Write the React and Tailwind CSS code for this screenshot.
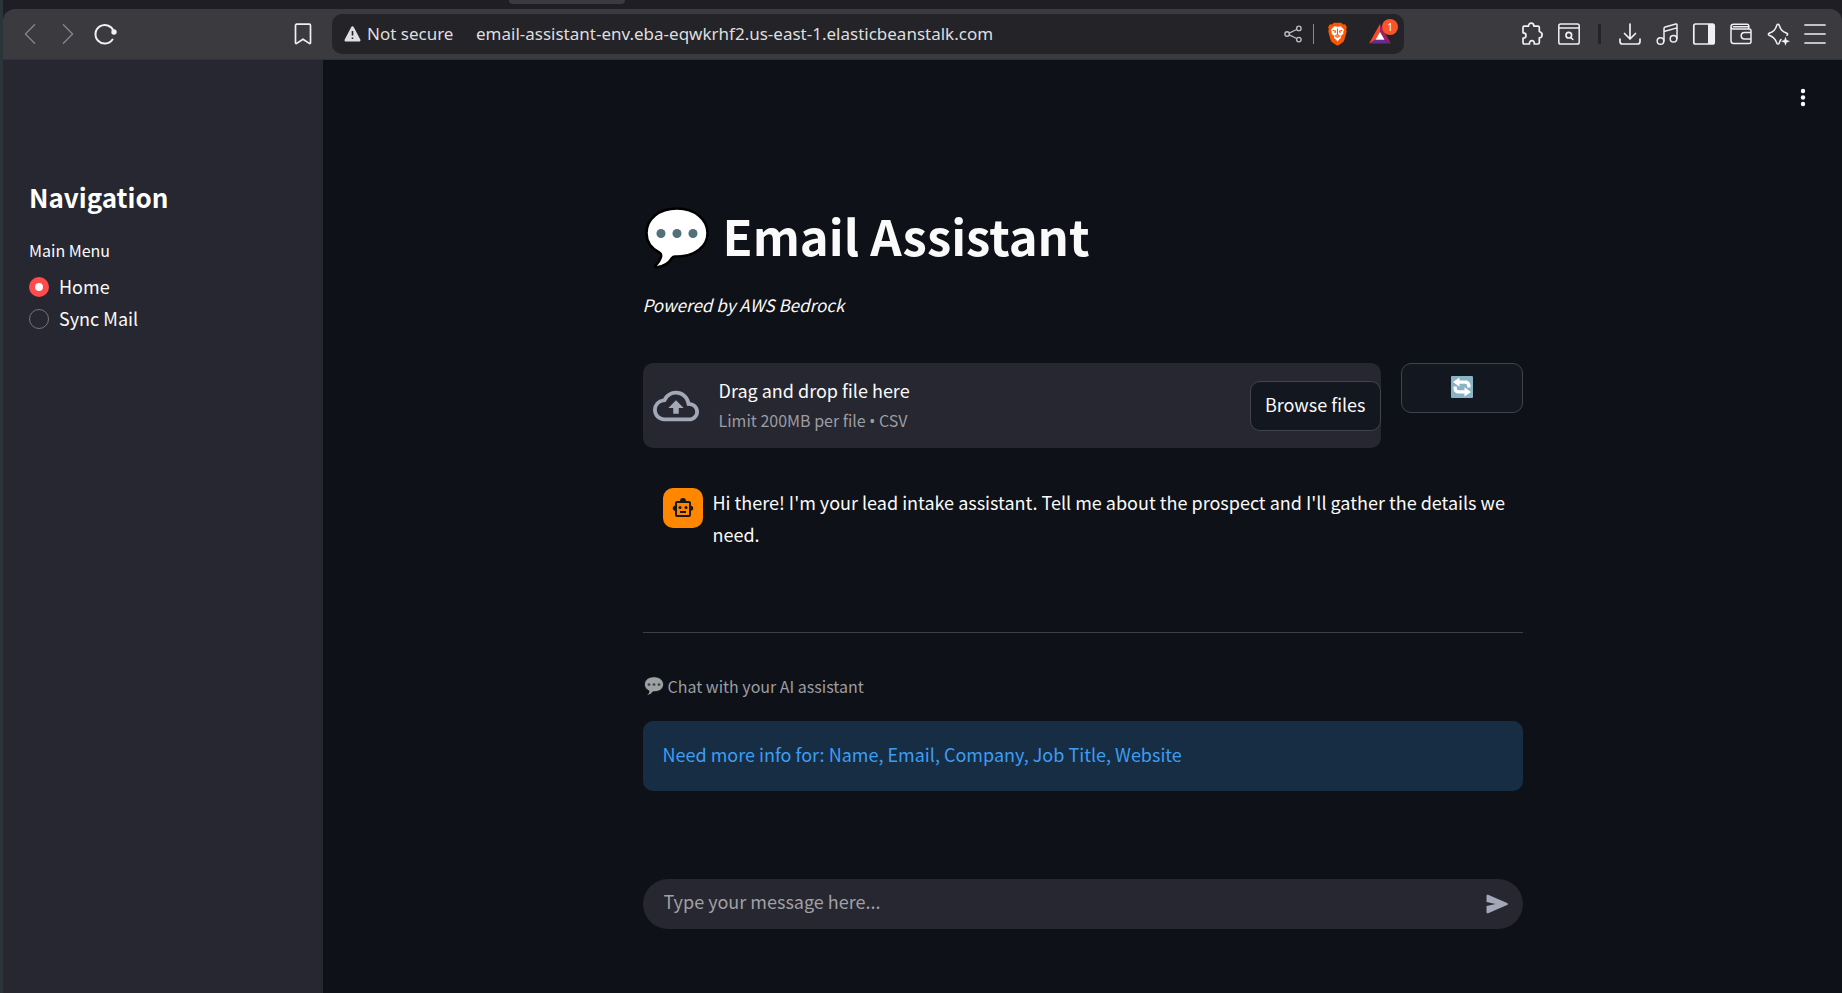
import clsx from "clsx";

function Icon({ size = "size-6", children, viewBox = "0 0 24 24" }) {
  return (
    <svg
      viewBox={viewBox}
      className={size}
      fill="none"
      stroke="currentColor"
      strokeWidth="1.5"
      strokeLinecap="round"
      strokeLinejoin="round"
      aria-hidden="true"
    >
      {children}
    </svg>
  );
}

function SpeechBubble({ className }) {
  return (
    <svg viewBox="0 0 64 62" className={className} aria-hidden="true">
      <path
        d="M32 1.5C14 1.5 1.5 12 1.5 26c0 9 5 15.500 13 19.500 1.500 1 2 2.500 1.500 4.500-.8 3.300-3.500 6.500-5.500 8.500-.8 1 0 2 1.300 1.800C19 59.500 24 56 27 51c.8-1.300 1.800-1.500 3-1.500h2c18 0 30.500-10 30.500-23.500S50 1.500 32 1.500z"
        fill="#fff"
        stroke="#000"
        strokeWidth="2.500"
      />
      <circle cx="16" cy="26.500" r="4.500" fill="#546e7a" />
      <circle cx="32" cy="26.500" r="4.500" fill="#546e7a" />
      <circle cx="48" cy="26.500" r="4.500" fill="#546e7a" />
    </svg>
  );
}

function BraveLogo() {
  return (
    <svg viewBox="0 0 22 26" className="h-6 w-[21px]" aria-hidden="true">
      <path
        d="M7 0.800h8l2 2 2.200-.3 2 3.200-.8 2 .6 2.500-2.600 9.300c-.3 1.200-1 2-2 2.700l-4.300 2.900c-.8.5-1.400.5-2.200 0l-4.300-2.900c-1-.7-1.700-1.500-2-2.700L1 10.200l.6-2.500-.8-2 2-3.200 2.200.3z"
        fill="#ff5500"
      />
      <path
        d="M7.500 4.500l3.500.6 3.500-.6 3.800 4.200-1.200 2 .4 1.800-3 3 .3 1.800-1.500 1.200L11 21l-2.300-2.500-1.500-1.200.3-1.800-3-3 .4-1.800-1.200-2z"
        fill="#fff"
      />
      <path
        d="M5.800 9l3 .9-.6 2.200M16.200 9l-3 .9.6 2.200M11 7v6.500M8.700 15.200l2.300-1.500 2.300 1.500-2.300 1.500z"
        fill="none"
        stroke="#ff5500"
        strokeWidth="1.200"
      />
    </svg>
  );
}

function RewardsLogo() {
  return (
    <svg viewBox="0 0 24 22" className="h-5 w-[22px]" aria-hidden="true">
      <path d="M12 0L0 21.500l7-4.200L12 8.500z" fill="#ff4724" />
      <path d="M12 0l12 21.500-7-4.200-5-8.800z" fill="#9e1f63" />
      <path d="M0 21.500h24l-7-4.200H7z" fill="#662d91" />
      <path d="M12 8.500l-5 8.800h10z" fill="#fff" />
    </svg>
  );
}

function ToolButton({ label, className, children }) {
  return (
    <button
      type="button"
      aria-label={label}
      className={clsx("flex h-8 shrink-0 items-center justify-center", className)}
    >
      {children}
    </button>
  );
}

function Toolbar() {
  return (
    <div className="flex h-[51px] items-center rounded-t-xl border-b border-[#323137] bg-[#3b3a3f] pl-4 pr-[15px] text-[#f0f0f4]">
      <ToolButton label="Back" className="w-[22px] text-[#85848a]">
        <Icon>
          <path d="M17 2L7 12l10 10" />
        </Icon>
      </ToolButton>
      <ToolButton label="Forward" className="ml-4 w-[22px] text-[#85848a]">
        <Icon>
          <path d="M7 2l10 10L7 22" />
        </Icon>
      </ToolButton>
      <ToolButton label="Reload" className="ml-3.5 w-6">
        <Icon>
          <path d="M19.500 17.500A9.300 9.300 0 1 1 20.500 9" strokeWidth="2" />
          <circle cx="21" cy="10" r="2.700" fill="currentColor" stroke="none" />
        </Icon>
      </ToolButton>

      <ToolButton label="Bookmark" className="ml-[174px] w-6">
        <Icon>
          <path d="M4.500 3.500c0-.8.500-1.300 1.300-1.300h12.400c.8 0 1.300.5 1.300 1.300v17.300c0 .8-.7 1-1.200.6L12 17.200l-6.300 4.200c-.5.400-1.200.2-1.200-.6z" strokeWidth="1.700" />
        </Icon>
      </ToolButton>

      {/* Address bar */}
      <div className="ml-[17px] flex h-10 max-w-[1072px] flex-1 items-center rounded-[10px] bg-[#242328] pl-3 font-['Noto_Sans',sans-serif] text-[17px] text-[#dededf]">
        <svg viewBox="0 0 17 16" className="h-4 w-[17px]" aria-hidden="true">
          <path d="M7.300.9c.5-1 1.900-1 2.400 0l6.600 12.600c.5 1 0 2.100-1.200 2.100H1.900c-1.200 0-1.700-1.100-1.200-2.100z" fill="#dfdee3" />
          <path d="M8.500 5v4.500M8.500 11.500v1.500" stroke="#242328" strokeWidth="1.600" />
        </svg>
        <span className="ml-1.5 w-[109px] shrink-0">Not secure</span>
        <span className="flex-1 truncate">
          email-assistant-env.eba-eqwkrhf2.us-east-1.elasticbeanstalk.com
        </span>
        <ToolButton label="Share" className="w-5 text-[#bdbcc2]">
          <Icon size="size-[18px]" viewBox="0 0 20 20">
            <circle cx="3.500" cy="10" r="2.500" />
            <circle cx="16.500" cy="3.800" r="2.500" />
            <circle cx="16.500" cy="16.200" r="2.500" />
            <path d="M5.800 9L14 5M5.800 11l8.200 4" />
          </Icon>
        </ToolButton>
        <div className="ml-2.5 h-5 w-px bg-[#8a898f]" />
        <ToolButton label="Brave Shields" className="ml-3 w-[22px]">
          <BraveLogo />
        </ToolButton>
        <ToolButton label="Rewards" className="relative ml-5 mr-3 w-6">
          <RewardsLogo />
          <span className="absolute top-px left-3.5 flex size-4 items-center justify-center rounded-full bg-[#fb542b] text-[10px] text-white">
            1
          </span>
        </ToolButton>
      </div>

      <div className="ml-auto flex items-center gap-[13px]">
        <ToolButton label="Extensions" className="w-6">
          <Icon>
            <path d="M3 5.500c0-.8.500-1.300 1.300-1.300H8.500c0-1.800 1-3 2.700-3s2.700 1.200 2.700 3h4.100c.8 0 1.300.5 1.300 1.300V9.400l2 1.400c.6.400.9 1 .8 1.700l-.3 1.800c-.1.500-.5.900-1 1.100l-1.500.5v4.800c0 .8-.5 1.300-1.300 1.300h-3.700c.2-2.200-.8-3.300-2.400-3.300s-2.600 1.100-2.400 3.300H4.300c-.8 0-1.300-.5-1.300-1.300v-4.500c1.900 0 3-1 3-2.700s-1.100-2.700-3-2.700z" strokeWidth="1.700" />
          </Icon>
        </ToolButton>
        <ToolButton label="Find in page" className="w-6">
          <Icon>
            <rect x="1.800" y="2" width="20.400" height="20" rx="1.800" />
            <path d="M2 6h20M13.800 15.500l2 2" strokeWidth="1.600" />
            <circle cx="11.800" cy="13.200" r="2.800" strokeWidth="1.700" />
          </Icon>
        </ToolButton>
        <div className="mx-1 h-5 w-[3px] bg-[#242328]" />
        <ToolButton label="Downloads" className="w-6">
          <Icon>
            <path d="M12 2v15M6.500 11.500L12 17l5.500-5.500M2 17v2.500c0 1.500 1 2.500 2.500 2.500h15c1.500 0 2.500-1 2.500-2.500V17" strokeWidth="1.700" />
          </Icon>
        </ToolButton>
        <ToolButton label="Media" className="w-6">
          <Icon>
            <path d="M9 19V6.500c0-.8.500-1.300 1.200-1.500l10.600-3c.7-.2 1.200.1 1.200.8V16.500M9 9.500l13-3.600" />
            <circle cx="5.500" cy="19" r="3.300" />
            <circle cx="18.500" cy="16.800" r="3.300" />
          </Icon>
        </ToolButton>
        <ToolButton label="Sidebar" className="w-6">
          <Icon>
            <rect x="1.800" y="2" width="20.400" height="20" rx="1.800" strokeWidth="1.700" />
            <path d="M16 2h5c.8 0 1.200.4 1.200 1.200v17.600c0 .8-.4 1.200-1.200 1.200h-5z" fill="currentColor" stroke="none" />
          </Icon>
        </ToolButton>
        <ToolButton label="Wallet" className="w-6">
          <Icon>
            <path d="M2 4.800v13.700C2 20 3 21.500 4.500 21.500H20c1 0 2-.8 2-2V9c0-1.200-1-2-2-2H4.500C3 7 2 6.300 2 4.800s1-2.500 2.500-2.500H18c1 0 1.800.6 1.800 1.800V7M4.500 4.700h15M22 10.500h-6.500c-2 0-3.300 1.500-3.300 3.300s1.300 3.200 3.300 3.200H22" />
          </Icon>
        </ToolButton>
        <ToolButton label="Leo AI" className="w-6">
          <Icon>
            <path d="M15 17.500c-.9.900-1.300 2-1.900 3.800-.5 1-1.700 1-2.200 0-1.500-4.400-3-6-7.800-8-1-.4-1-1.600 0-2 4.800-2 6.300-3.500 7.800-8.300.4-1 1.800-1 2.200 0 1.600 4.800 3 6.300 7.800 8.300 1 .4 1 1.600 0 2" />
            <path d="M19.500 14.800l1.200 3.300 3.300 1.200-3.300 1.200-1.200 3.300-1.200-3.300-3.300-1.200 3.300-1.200z" fill="currentColor" stroke="none" />
          </Icon>
        </ToolButton>
        <ToolButton label="Menu" className="w-6">
          <Icon>
            <path d="M2 3h20M2 12h20M2 21h20" strokeWidth="1.700" />
          </Icon>
        </ToolButton>
      </div>
    </div>
  );
}

function RadioOption({ label, defaultChecked }) {
  return (
    <label className="flex h-8 items-center gap-2.5 text-[18px] text-[#fafafa]">
      <input
        type="radio"
        name="menu"
        defaultChecked={defaultChecked}
        className="mt-0.5 size-5 shrink-0 appearance-none rounded-full border border-[#75767c] checked:border-[6px] checked:border-[#ff4b4b] checked:bg-[#fafafa]"
      />
      {label}
    </label>
  );
}

function Sidebar() {
  return (
    <aside className="w-80 shrink-0 bg-[#262730] px-[26px] pt-[117px]">
      <h2 className="text-[26px] leading-10 font-bold text-white">Navigation</h2>
      <fieldset className="mt-[21px]">
        <legend className="mb-2 text-[16px] leading-6 text-[#fafafa]">Main Menu</legend>
        <RadioOption label="Home" defaultChecked />
        <RadioOption label="Sync Mail" />
      </fieldset>
    </aside>
  );
}

function Uploader() {
  return (
    <div className="flex items-start gap-5">
      <section className="flex h-[85px] flex-1 items-center rounded-[10px] bg-[#262730] pl-2.5">
        <svg viewBox="0 0 24 24" className="size-[46px]" fill="#a3a8b8" aria-hidden="true">
          <path d="M19.350 10.040A7.490 7.490 0 0 0 12 4C9.110 4 6.600 5.640 5.350 8.040A5.994 5.994 0 0 0 0 14c0 3.310 2.690 6 6 6h13c2.760 0 5-2.240 5-5 0-2.640-2.050-4.780-4.650-4.960zM19 18H6c-2.210 0-4-1.790-4-4 0-2.050 1.530-3.760 3.560-3.970l1.070-.11.500-.95A5.469 5.469 0 0 1 12 6c2.620 0 4.880 1.860 5.390 4.430l.3 1.500 1.530.11A2.980 2.980 0 0 1 22 15c0 1.650-1.350 3-3 3zM8 13h2.550v3h2.900v-3H16l-4-4z" />
        </svg>
        <div className="ml-5 flex-1 pb-[3px]">
          <p className="text-[18px] leading-8 text-[#fafafa]">Drag and drop file here</p>
          <p className="text-[16px] leading-7 text-[#9c9da3]">
            Limit 200MB per file <span className="font-['Noto_Sans',sans-serif]">•</span> CSV
          </p>
        </div>
        <button
          type="button"
          className="h-[50px] rounded-[10px] border border-[#41444c] bg-[#131720] px-3.5 pb-0.5 text-[18px] text-[#fafafa]"
        >
          Browse files
        </button>
      </section>

      <button
        type="button"
        aria-label="Refresh"
        className="flex h-[50px] w-[122px] items-center justify-center rounded-[10px] border border-[#41444c] bg-[#131720] pb-0.5"
      >
        <svg viewBox="0 0 22 22" className="size-[22px]" aria-hidden="true">
          <rect width="22" height="22" rx="1" fill="#8ab3c4" />
          <path d="M8.500 1.500v3H14c3.300 0 5.500 2 5.500 5v2h-3.300v-1.500c0-1.500-1-2.300-2.600-2.300H8.500v3L2 6z" fill="#fff" />
          <path d="M13.500 20.500v-3H8c-3.300 0-5.500-2-5.500-5v-2h3.300V12c0 1.500 1 2.300 2.600 2.300h5.100v-3L20 16z" fill="#fff" />
        </svg>
      </button>
    </div>
  );
}

function ChatMessage() {
  return (
    <div className="mt-[38px] flex gap-2.5 pr-3.5 pb-0.5 pl-5">
      <div className="mt-0.5 flex size-10 shrink-0 items-center justify-center rounded-[10px] bg-[#ff8700]">
        <svg viewBox="0 0 24 24" className="size-6" fill="none" stroke="#17171c" strokeWidth="2" aria-hidden="true">
          <rect x="5" y="6" width="14" height="14" rx="1" />
          <path d="M9 16h6" />
          <path d="M12 2a3 3 0 0 1 3 3H9a3 3 0 0 1 3-3zM4 9.500v5.500a2.800 2.800 0 0 1 0-5.500zM20 9.500v5.500a2.800 2.800 0 0 0 0-5.500z" fill="#17171c" stroke="none" />
          <circle cx="9" cy="11.500" r="1.500" fill="#17171c" stroke="none" />
          <circle cx="15" cy="11.500" r="1.500" fill="#17171c" stroke="none" />
        </svg>
      </div>
      <p className="text-[18px] leading-8 text-[#fafafa]">
        Hi there! I'm your lead intake assistant. Tell me about the prospect and I'll gather the details we need.
      </p>
    </div>
  );
}

function MessageInput() {
  return (
    <form
      onSubmit={(e) => e.preventDefault()}
      className="mt-[88px] flex h-[50px] items-center rounded-full bg-[#262730] pl-[21px] pr-3"
    >
      <input
        type="text"
        aria-label="Message"
        placeholder="Type your message here..."
        className="h-full flex-1 bg-transparent pb-1.5 text-[18px] text-[#fafafa] outline-none placeholder:text-[#a0a0a5]"
      />
      <button type="submit" aria-label="Send" className="flex size-7 items-center justify-center">
        <svg viewBox="0 0 24 20" className="h-5 w-6" fill="#a3a8b8" aria-hidden="true">
          <path d="M1.500 1.800C1.500.9 2.300.4 3.100.8l19 8.100c1.100.5 1.100 1.700 0 2.200l-19 8.100c-.8.400-1.600-.1-1.600-1V12l9-2-9-2z" />
        </svg>
      </button>
    </form>
  );
}

export default function App() {
  return (
    <div className="flex min-h-screen flex-col border-l-[3px] border-[#2b3539] bg-[#1f1e24] font-['Noto_Sans_CJK_SC',sans-serif]">

      {/* Tab strip */}
      <div className="h-[9px]">
        <div className="ml-[506px] h-1 w-[116px] rounded-b-md bg-[#3b3a3f]" />
      </div>

      <Toolbar />

      <div className="flex flex-1">
        <Sidebar />

        <main className="relative flex-1 bg-[#0e1117]">
          <button type="button" aria-label="App menu" className="absolute top-[25px] right-[27px] flex size-6 items-center justify-center">
            <svg viewBox="0 0 24 24" className="size-6" fill="#fafafa" aria-hidden="true">
              <circle cx="12" cy="6" r="2.200" />
              <circle cx="12" cy="12.500" r="2.200" />
              <circle cx="12" cy="19" r="2.200" />
            </svg>
          </button>

          <div className="mx-auto w-full max-w-[880px] pt-[145px]">
            <h1 className="flex h-[66px] items-center text-[49px] leading-[66px] font-bold text-[#fafafa]">
              <SpeechBubble className="mr-3.5 ml-0.5 h-[62px] w-16" />
              <span className="pb-1.5">Email Assistant</span>
            </h1>
            <p className="mt-[18px] mb-[42px] text-[17px] leading-8 text-[#fafafa] italic">
              Powered by AWS Bedrock
            </p>

            <Uploader />
            <ChatMessage />

            <hr className="mt-20 border-[#3e4044]" />

            <p className="mt-[39px] flex h-7 items-center text-[16px] leading-7 text-[#9c9da3]">
              <SpeechBubble className="mr-1 ml-px size-5 opacity-60" />
              Chat with your AI assistant
            </p>

            <div role="status" className="mt-[21px] flex h-[70px] items-center rounded-[10px] bg-[#172d43] px-5 pb-1 text-[18px] text-[#3d9df3]">
              Need more info for: Name, Email, Company, Job Title, Website
            </div>

            <MessageInput />
          </div>
        </main>
      </div>

    </div>
  );
}
